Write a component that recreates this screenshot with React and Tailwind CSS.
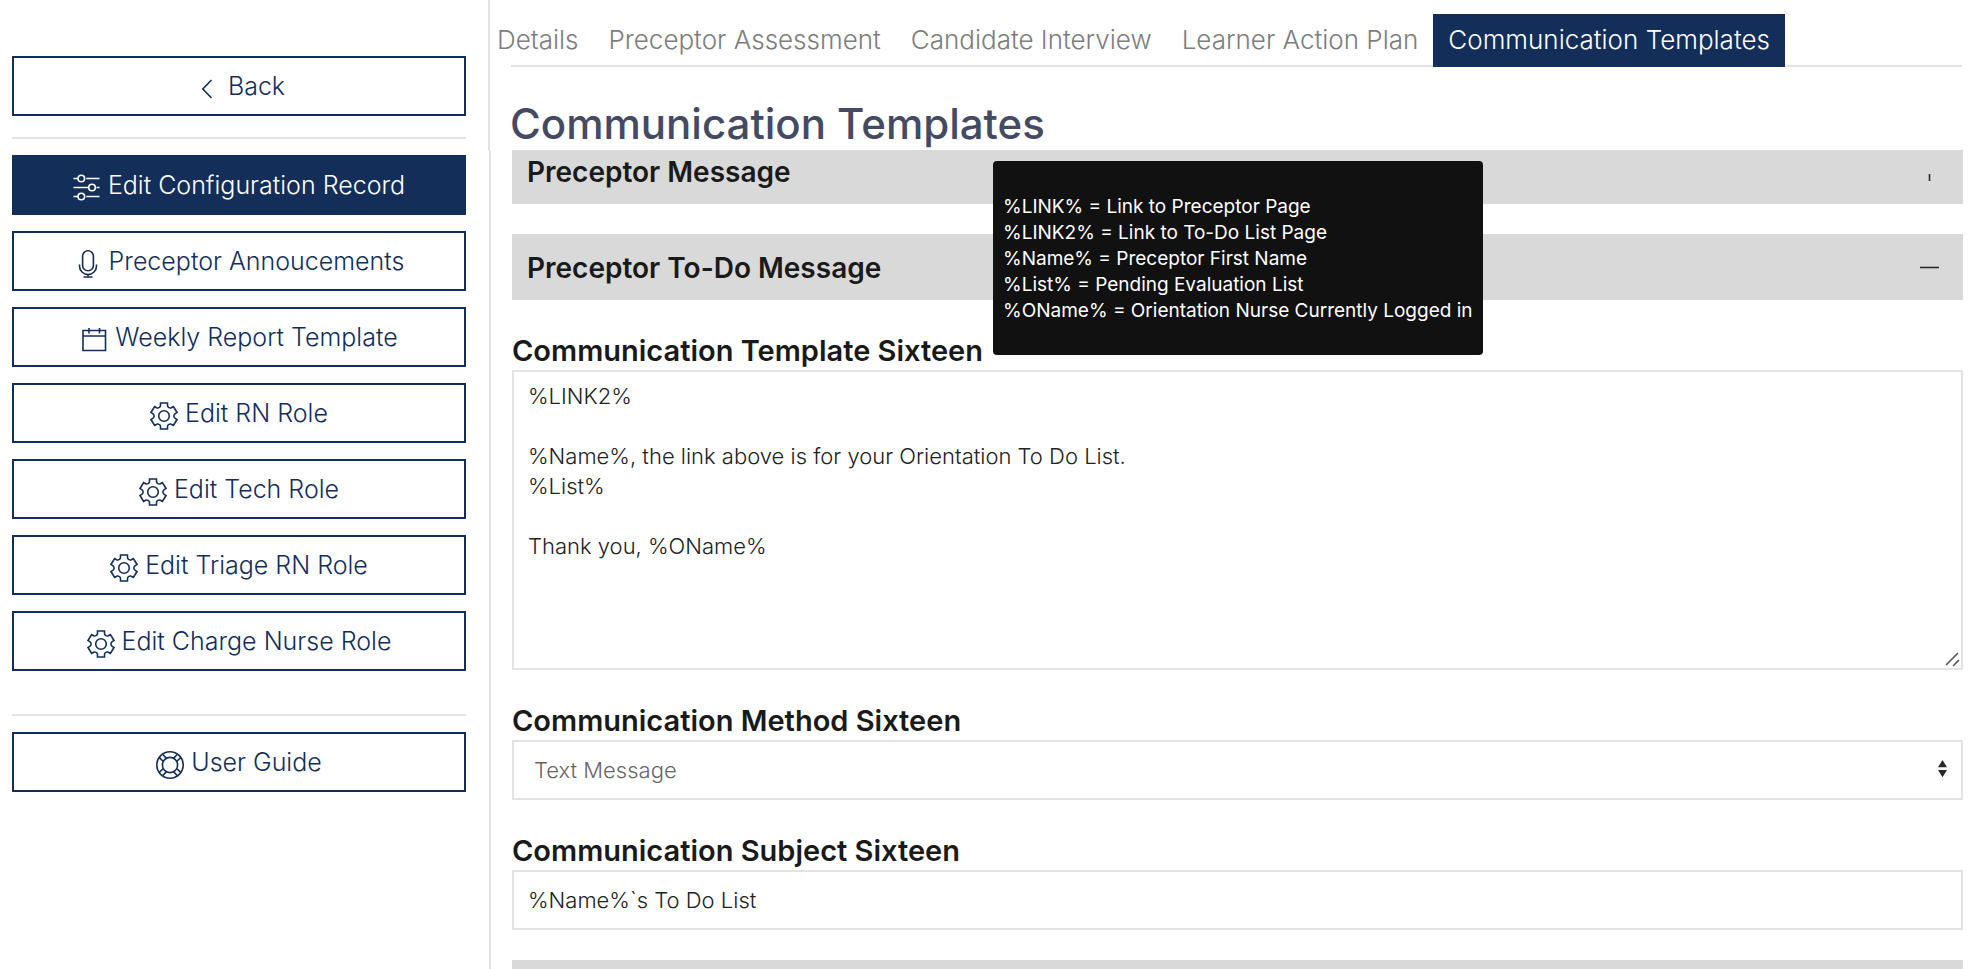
import React, { useState } from "react";

function Icon({ name }) {
  return (
    <svg
      viewBox="0 0 28 28"
      className="mt-1.5 size-7 shrink-0"
      fill="none"
      stroke="currentColor"
      strokeWidth="1.6"
      aria-hidden="true"
    >
      {name === "back" && <path d="M18.500 5 9.800 14l8.700 9" />}
      {name === "sliders" && (
        <>
          <path d="M.500 4.500H4.700M13.300 4.500H26.500M.500 13.500H15M23.500 13.500h3M.500 22.500H4.700M13.300 22.500H26.500" />
          <circle cx="8.300" cy="4.500" r="3.300" />
          <circle cx="19" cy="13.500" r="3.300" />
          <circle cx="8.300" cy="22.500" r="3.300" />
        </>
      )}
      {name === "mic" && (
        <>
          <rect x="8.600" y=".8" width="10.800" height="20" rx="5.400" />
          <path d="M5.500 14.500v1.500a8.500 8.500 0 0 0 17 0v-1.500M14 24.500v2.500M9.500 27h9" />
        </>
      )}
      {name === "calendar" && (
        <path d="M3 4.500h22.500v20H3zM3 10h22.500M9 2v5.500M19.500 2v5.500" />
      )}
      {name === "gear" && (
        <>
          <path d="M10.500 1h7v2.600c.2 1.700 2.200 2.900 3.900 2.100l2-1.200 3.600 6-2.100 1.400c-1.300 1-1.300 3.200 0 4.200l2.100 1.400-3.600 6-2-1.200c-1.700-.8-3.700.4-3.900 2.100V27h-7v-2.600c-.2-1.700-2.200-2.900-3.900-2.100l-2 1.200-3.600-6 2.100-1.400c1.300-1 1.300-3.200 0-4.200L1 10.500l3.600-6 2 1.200c1.700.8 3.700-.4 3.900-2.100z" />
          <circle cx="14" cy="14" r="5.300" />
        </>
      )}
      {name === "ring" && (
        <>
          <circle cx="14" cy="14" r="13.200" />
          <circle cx="14" cy="14" r="7.600" />
          <path d="M3.200 6.600 7.400 10.500M6.600 3.200 10.500 7.400M24.800 6.600 20.600 10.500M21.400 3.200 17.500 7.400M3.200 21.400 7.400 17.500M6.600 24.800 10.500 20.600M24.800 21.400 20.600 17.500M21.400 24.800 17.500 20.600" />
        </>
      )}
    </svg>
  );
}

function SideButton({ icon, active, children }) {
  return (
    <button
      type="button"
      className={
        "flex h-15 w-full items-center justify-center gap-[7px] border-2 border-[#132e59] text-[25px] leading-8 font-light " +
        (active ? "bg-[#132e59] text-white" : "bg-white text-[#132e59]")
      }
    >
      <Icon name={icon} />
      <span>{children}</span>
    </button>
  );
}

const actions = [
  ["sliders", "Edit Configuration Record"],
  ["mic", "Preceptor Annoucements"],
  ["calendar", "Weekly Report Template"],
  ["gear", "Edit RN Role"],
  ["gear", "Edit Tech Role"],
  ["gear", "Edit Triage RN Role"],
  ["gear", "Edit Charge Nurse Role"],
];

const tabs = [
  "Details",
  "Preceptor Assessment",
  "Candidate Interview",
  "Learner Action Plan",
  "Communication Templates",
];

const hints = [
  "%LINK% = Link to Preceptor Page",
  "%LINK2% = Link to To-Do List Page",
  "%Name% = Preceptor First Name",
  "%List% = Pending Evaluation List",
  "%OName% = Orientation Nurse Currently Logged in",
];

function SectionBar({ title, mark }) {
  return (
    <button
      type="button"
      className="flex h-[66px] w-full items-center justify-between bg-[#d9d9d9] px-[15px] pt-px text-left text-[28px] leading-8 font-semibold text-[#1a1a1a]"
    >
      <span>{title}</span>
      <svg viewBox="0 0 36 36" className="size-9" stroke="#2b2b2b" strokeWidth="1.600" aria-hidden="true">
        <path d={mark === "open" ? "M8 17.500h19" : "M17.500 20v7"} />
      </svg>
    </button>
  );
}

const labelClass = "block pt-0.5 text-[29px] leading-[38px] font-semibold text-[#1a1a1a]";

export default function App() {
  const [message, setMessage] = useState(
    "%LINK2%\n\n%Name%, the link above is for your Orientation To Do List.\n%List%\n\nThank you, %OName%"
  );
  const [subject, setSubject] = useState("%Name%`s To Do List");

  return (
    <div className="flex h-screen overflow-hidden bg-white font-['Inter',sans-serif]">
      <aside className="flex w-[488px] shrink-0 flex-col pt-14 pr-[22px] pl-3">
        <SideButton icon="back">Back</SideButton>
        <hr className="mt-[21px] mb-4 border-t-2 border-[#e3e3e3]" />
        <div className="flex flex-col gap-4">
          {actions.map(([icon, label], i) => (
            <SideButton key={label} icon={icon} active={i === 0}>
              {label}
            </SideButton>
          ))}
        </div>
        <hr className="mt-[43px] mb-4 border-t-2 border-[#e3e3e3]" />
        <SideButton icon="ring">User Guide</SideButton>
      </aside>

      <main className="flex min-w-0 flex-1 flex-col">
        <header className="h-[150px] shrink-0 overflow-hidden border-l-2 border-[#e3e3e3] pt-3.5">
          <nav className="-ml-2 flex">
            {tabs.map((tab, i) => (
              <a
                key={tab}
                href="#"
                className={
                  "relative z-10 h-[53px] px-[15px] text-[26px] leading-[52px] font-light whitespace-nowrap " +
                  (i === 4 ? "bg-[#132e59] text-white" : "text-[#7d7d7d]")
                }
              >
                {tab}
              </a>
            ))}
          </nav>
          <div className="-mt-0.5 mr-2.5 ml-[21px] border-t-2 border-[#e3e3e3]" />
          <h1 className="mt-8 ml-5 text-[42px] leading-[50px] font-medium text-[#434a62]">
            Communication Templates
          </h1>
        </header>

        <div className="ml-px min-h-0 flex-1 overflow-hidden border-l-2 border-[#e3e3e3] pr-[9px] pl-[21px]">
          <div className="-mt-3 flex flex-col gap-[30px]">
            <SectionBar title="Preceptor Message" mark="closed" />
            <SectionBar title="Preceptor To-Do Message" mark="open" />

            <div>
              <div className="flex">
                <div className="relative">
                  <label htmlFor="template" className={labelClass}>
                    Communication Template Sixteen
                  </label>
                  <div
                    role="tooltip"
                    className="absolute bottom-[15px] left-full z-20 ml-2.5 rounded bg-[#111] px-2.5 pt-[33px] pb-[31px] text-[19px] leading-[26px] whitespace-nowrap text-white"
                  >
                    {hints.map((hint) => (
                      <p key={hint}>{hint}</p>
                    ))}
                  </div>
                </div>
              </div>
              <div className="relative">
                <textarea
                  id="template"
                  value={message}
                  onChange={(e) => setMessage(e.target.value)}
                  className="block h-[300px] w-full resize-none border-2 border-[#e3e3e3] px-3.5 py-[9px] text-[22px] leading-[30px] font-light text-[#222] outline-none"
                />
                <svg
                  viewBox="0 0 15 15"
                  className="pointer-events-none absolute right-[3px] bottom-[3px] size-[15px]"
                  stroke="#555"
                  strokeWidth="1.600"
                  aria-hidden="true"
                >
                  <path d="M1 13 13 1M8 14l6-6" />
                </svg>
              </div>
            </div>

            <div>
              <label htmlFor="method" className={labelClass}>
                Communication Method Sixteen
              </label>
              <div className="relative">
                <select
                  id="method"
                  className="block h-15 w-full appearance-none border-2 border-[#e3e3e3] bg-white px-5 text-[22px] font-light text-[#666] outline-none"
                >
                  <option>Text Message</option>
                </select>
                <svg
                  viewBox="0 0 9 18"
                  className="pointer-events-none absolute top-5 right-4 h-[18px] w-[9px]"
                  fill="#2b2b2b"
                  aria-hidden="true"
                >
                  <path d="M4.500 0 9 7.200H0zM0 10h9l-4.500 7.200z" />
                </svg>
              </div>
            </div>

            <div>
              <label htmlFor="subject" className={labelClass}>
                Communication Subject Sixteen
              </label>
              <input
                id="subject"
                type="text"
                value={subject}
                onChange={(e) => setSubject(e.target.value)}
                className="block h-15 w-full border-2 border-[#e3e3e3] px-3.5 text-[22px] font-light text-[#222] outline-none"
              />
            </div>

            <div className="h-[66px] bg-[#d9d9d9]" />
          </div>
        </div>
      </main>
    </div>
  );
}
